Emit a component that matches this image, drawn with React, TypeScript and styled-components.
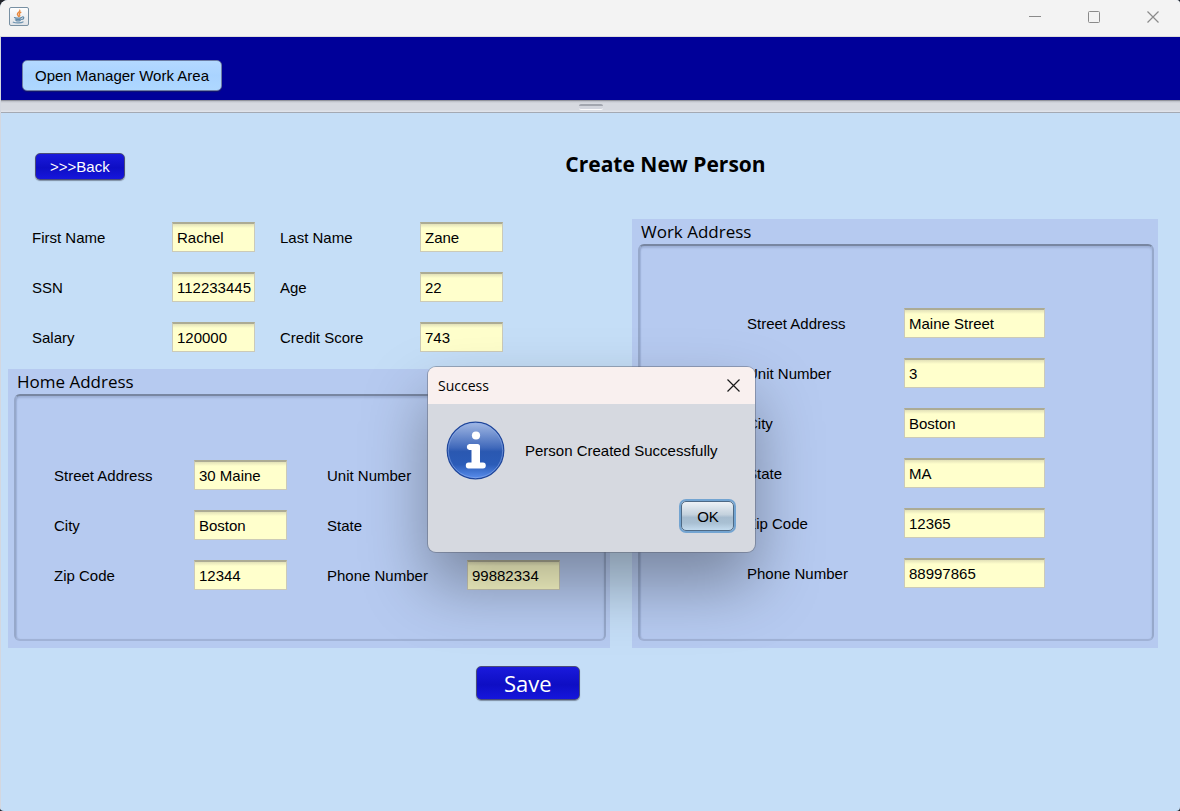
import React, { useId } from "react";
import styled, { createGlobalStyle } from "styled-components";

const GlobalStyle = createGlobalStyle`
  * { box-sizing: border-box; }
  body {
    margin: 0;
    background: #23252b;
    color: #000;
    font: 15px/20px "Liberation Sans", Arial, sans-serif;
  }
  button, input { font: inherit; color: inherit; }
`;

const humanist = `"Open Sans", "Noto Sans", sans-serif`;

const Window = styled.div`
  position: relative;
  display: flex;
  flex-direction: column;
  min-height: 100vh;
  border-radius: 8px 4px 4px 4px;
  overflow: hidden;
  background: #c5def7;
`;

const TitleBar = styled.div`
  display: flex;
  align-items: center;
  justify-content: space-between;
  height: 37px;
  padding: 0 0 3px 9px;
  background: #f3f3f3;
  border-bottom: 1px solid #dcdcdc;
`;

const WindowControls = styled.div`
  display: flex;
  gap: 5px;
`;

const ControlButton = styled.button`
  display: flex;
  align-items: center;
  justify-content: center;
  width: 54px;
  height: 30px;
  padding: 0;
  border: 0;
  background: none;
  color: #8a8a8a;
`;

const Body = styled.div`
  display: flex;
  flex-direction: column;
  flex: 1;
  border-left: 1px solid #d3d7e0;
`;

const Toolbar = styled.header`
  height: 63px;
  padding: 23px 21px 0;
  background: #000099;
`;

const Splitter = styled.div`
  display: flex;
  justify-content: center;
  height: 13px;
  padding-top: 3px;
  border-top: 1px solid #92949c;
  border-bottom: 1px solid #a4a9b3;
  background: linear-gradient(#b8bbc4, #d6d9e0 2px, #d6d9e0 9px, #e0e3ea 10px);
`;

const Grip = styled.div`
  width: 24px;
  height: 6px;
  border-radius: 2px;
  border-top: 2px solid #a2a6af;
  border-bottom: 1px solid #fafafc;
  background: #d2d5dd;
`;

const Button = styled.button<{ $tone: "light" | "deep"; $large?: boolean }>`
  display: block;
  border-radius: 5px;
  border: 1px solid ${(p) => (p.$tone === "light" ? "#6d7da6" : "#4b4d78")};
  background: ${(p) =>
    p.$tone === "light"
      ? "linear-gradient(#b4d9ff, #a9d3ff 50%, #afd8ff)"
      : "linear-gradient(#1a1adc, #0e0ec4 55%, #1616dc)"};
  box-shadow: 0 1px 1px rgba(40, 44, 60, 0.45);
  color: ${(p) => (p.$tone === "light" ? "#000" : "#fff")};
  font-family: ${(p) => (p.$large ? humanist : "inherit")};
  font-size: ${(p) => (p.$large ? "22px" : "15px")};
  line-height: ${(p) => (p.$large ? "31px" : p.$tone === "light" ? "28px" : "24px")};
  padding: ${(p) => (p.$large ? "1px 27px 0" : p.$tone === "light" ? "1px 12px 0" : "1px 14px 0")};
`;

const Page = styled.main`
  flex: 1;
  padding: 40px 22px 0 7px;
`;

const Heading = styled.div`
  display: grid;
  grid-template-columns: 1fr auto 1fr;
  align-items: start;
  height: 66px;
  padding: 0 0 0 27px;
`;

const Title = styled.h1`
  margin: 0;
  padding-left: 138px;
  font: bold 21px/22px ${humanist};
`;

const Columns = styled.div`
  display: grid;
  grid-template-columns: 602fr 526fr;
  column-gap: 22px;
`;

const LeftColumn = styled.div`
  display: flex;
  flex-direction: column;
`;

const FieldGrid = styled.div<{ $columns: number; $gap?: number }>`
  display: grid;
  grid-template-columns: repeat(${(p) => p.$columns}, max-content);
  gap: 20px ${(p) => p.$gap ?? 0}px;
`;

const PersonFields = styled.div`
  padding: 3px 24px 17px;
`;

const Panel = styled.section`
  display: flex;
  flex-direction: column;
  padding: 0 4px 7px 6px;
  background: #b6caf0;
`;

const PanelTitle = styled.h2`
  margin: 0;
  padding: 1px 0 0 3px;
  font: 17px/24px ${humanist};
`;

const PanelFrame = styled.div<{ $inset: string }>`
  flex: 1;
  padding: ${(p) => p.$inset};
  border: 2px solid #96a8ca;
  border-top-color: #7886a1;
  border-bottom-color: #a0b2d6;
  border-radius: 6px;
  box-shadow: inset 0 2px 2px rgba(70, 85, 125, 0.2), inset 1px 0 1px rgba(70, 85, 125, 0.15);
`;

const FieldRow = styled.div`
  display: flex;
  align-items: center;
`;

const FieldLabel = styled.label<{ $width: number }>`
  width: ${(p) => p.$width}px;
  padding-top: 1px;
`;

const TextBox = styled.input<{ $width: number }>`
  width: ${(p) => p.$width}px;
  height: 30px;
  padding: 0 2px 0 4px;
  border: 1px solid #cbcab8;
  border-top: 2px solid #acab94;
  border-radius: 0;
  outline: 0;
  background: linear-gradient(#e2e1b8, #ffffcc 4px);
`;

const SaveRow = styled.div`
  display: flex;
  padding: 18px 0 24px 468px;
`;

const Dialog = styled.section`
  position: absolute;
  top: 367px;
  left: 50%;
  margin-left: -162px;
  width: 327px;
  border-radius: 8px;
  background: #d6d9e0;
  box-shadow: 0 0 0 1px rgba(90, 95, 110, 0.45), 0 32px 64px rgba(0, 0, 0, 0.34);
`;

const DialogBar = styled.header`
  display: flex;
  align-items: center;
  justify-content: space-between;
  height: 37px;
  padding-left: 10px;
  border-radius: 8px 8px 0 0;
  background: #f9f0ef;
`;

const DialogTitle = styled.h2`
  margin: 0;
  font: 14px/20px ${humanist};
`;

const CloseButton = styled(ControlButton)`
  width: 43px;
  color: #1a1a1a;
`;

const DialogMessage = styled.div`
  display: flex;
  align-items: center;
  gap: 20px;
  padding: 17px 19px 0 18px;
`;

const MessageText = styled.p`
  margin: 0;
  white-space: nowrap;
`;

const DialogActions = styled.div`
  display: flex;
  justify-content: flex-end;
  padding: 21px;
`;

const OkButton = styled.button`
  width: 53px;
  height: 30px;
  padding: 2px 0 0 1px;
  border: 1px solid #4d6985;
  border-radius: 5px;
  background: linear-gradient(#eef2f6, #c3d1dd 45%, #a6bccf 55%, #a9c0d3 75%, #c3dbee);
  box-shadow: 0 0 0 2px #73a4d1;
`;

function JavaIcon() {
  return (
    <svg width="20" height="20" viewBox="0 0 20 20" aria-hidden="true">
      <defs>
        <linearGradient id="java-tile" x1="0" y1="0" x2="0" y2="1">
          <stop offset="0" stopColor="#ffffff" />
          <stop offset="1" stopColor="#dfe2e6" />
        </linearGradient>
      </defs>
      <rect x="0.5" y="0.5" width="19" height="18" rx="1.5" fill="url(#java-tile)" stroke="#7890a3" />
      <path d="M10.8 3.200c.8 1.700-2.700 2.400-2.400 4.100.1.800.8 1.300 1.100 2.100M11.800 5.300c-1.600.8-1.900 1.600-1.200 2.400.6.700.2 1.300-.5 1.900" fill="none" stroke="#e8883e" strokeWidth="1.300" strokeLinecap="round" />
      <path d="M5.500 10.500c2 .6 5.500.6 7 0M6.200 12c1.500.5 4.500.5 5.800 0M6.900 13.500c1.200.5 3.200.5 4.400 0M13.200 10c2.200-.6 2 2-.4 2.500" fill="none" stroke="#5f88a8" strokeWidth="1.200" strokeLinecap="round" />
      <path d="M4.300 15.200c2.500 1 8 .9 9.700-.3" fill="none" stroke="#6e94b1" strokeWidth="1.200" strokeLinecap="round" />
    </svg>
  );
}

function Cross({ size }: { size: number }) {
  return (
    <svg width={size} height={size} viewBox={`0 0 ${size} ${size}`} aria-hidden="true">
      <path
        d={`M.5.5 ${size - 0.5} ${size - 0.5}M${size - 0.5}.5.5 ${size - 0.5}`}
        stroke="currentColor"
        strokeWidth="1.200"
      />
    </svg>
  );
}

function InfoIcon() {
  return (
    <svg width="59" height="59" viewBox="0 0 59 59" aria-hidden="true">
      <defs>
        <linearGradient id="info-disc" x1="0" y1="0" x2="0" y2="1">
          <stop offset="0" stopColor="#a3b9e4" />
          <stop offset="0.450" stopColor="#4069bb" />
          <stop offset="0.520" stopColor="#2a58b1" />
          <stop offset="0.750" stopColor="#2b5cb8" />
          <stop offset="1" stopColor="#5b8fee" />
        </linearGradient>
      </defs>
      <circle cx="29.500" cy="29.500" r="28.300" fill="url(#info-disc)" stroke="#1f469b" strokeWidth="1.200" />
      <circle cx="29.500" cy="29.500" r="27.200" fill="none" stroke="#8eade9" strokeOpacity="0.550" />
      <circle cx="30" cy="14.500" r="4.100" fill="#fff" />
      <path
        d="M23.300 23.100H31.500Q34 23.100 34 25.600V41.500H37Q39.800 41.700 39.800 44.500T37 47.500H22.500Q19.800 47.300 19.800 44.500T22.500 41.500H25.500V29H23.300Q20.800 28.800 20.800 26.100T23.300 23.100Z"
        fill="#fff"
      />
    </svg>
  );
}

type FieldProps = { label: string; value: string; labelWidth: number; width: number };

function Field({ label, value, labelWidth, width }: FieldProps) {
  const id = useId();
  return (
    <FieldRow>
      <FieldLabel htmlFor={id} $width={labelWidth}>{label}</FieldLabel>
      <TextBox id={id} type="text" defaultValue={value} $width={width} />
    </FieldRow>
  );
}

const person = [
  ["First Name", "Rachel"],
  ["Last Name", "Zane"],
  ["SSN", "112233445"],
  ["Age", "22"],
  ["Salary", "120000"],
  ["Credit Score", "743"],
];

const home = [
  ["Street Address", "30 Maine"],
  ["Unit Number", ""],
  ["City", "Boston"],
  ["State", ""],
  ["Zip Code", "12344"],
  ["Phone Number", "99882334"],
];

const work = [
  ["Street Address", "Maine Street"],
  ["Unit Number", "3"],
  ["City", "Boston"],
  ["State", "MA"],
  ["Zip Code", "12365"],
  ["Phone Number", "88997865"],
];

export default function App() {
  return (
    <>
      <GlobalStyle />
      <Window>
        <TitleBar>
          <JavaIcon />
          <WindowControls>
            <ControlButton aria-label="Minimize">
              <svg width="12" height="12" viewBox="0 0 12 12" aria-hidden="true">
                <path d="M0 5.500H12" stroke="currentColor" />
              </svg>
            </ControlButton>
            <ControlButton aria-label="Maximize">
              <svg width="12" height="12" viewBox="0 0 12 12" aria-hidden="true">
                <rect x="0.500" y="0.500" width="11" height="11" rx="1" fill="none" stroke="currentColor" />
              </svg>
            </ControlButton>
            <ControlButton aria-label="Close">
              <Cross size={12} />
            </ControlButton>
          </WindowControls>
        </TitleBar>
        <Body>
          <Toolbar>
            <Button $tone="light">Open Manager Work Area</Button>
          </Toolbar>
          <Splitter>
            <Grip />
          </Splitter>
          <Page>
            <Heading>
              <div>
                <Button $tone="deep">&gt;&gt;&gt;Back</Button>
              </div>
              <Title>Create New Person</Title>
            </Heading>
            <Columns>
              <LeftColumn>
                <PersonFields>
                  <FieldGrid $columns={2} $gap={25}>
                    {person.map(([label, value]) => (
                      <Field key={label} label={label} value={value} labelWidth={140} width={83} />
                    ))}
                  </FieldGrid>
                </PersonFields>
                <Panel>
                  <PanelTitle>Home Address</PanelTitle>
                  <PanelFrame $inset="64px 0 49px 38px">
                    <FieldGrid $columns={2} $gap={40}>
                      {home.map(([label, value]) => (
                        <Field key={label} label={label} value={value} labelWidth={140} width={93} />
                      ))}
                    </FieldGrid>
                  </PanelFrame>
                </Panel>
              </LeftColumn>
              <Panel>
                <PanelTitle>Work Address</PanelTitle>
                <PanelFrame $inset="62px 0 49px 107px">
                  <FieldGrid $columns={1}>
                    {work.map(([label, value]) => (
                      <Field key={label} label={label} value={value} labelWidth={157} width={141} />
                    ))}
                  </FieldGrid>
                </PanelFrame>
              </Panel>
            </Columns>
            <SaveRow>
              <Button $tone="deep" $large>Save</Button>
            </SaveRow>
          </Page>
        </Body>
        <Dialog role="dialog" aria-labelledby="dialog-title">
          <DialogBar>
            <DialogTitle id="dialog-title">Success</DialogTitle>
            <CloseButton aria-label="Close dialog">
              <Cross size={13} />
            </CloseButton>
          </DialogBar>
          <DialogMessage>
            <InfoIcon />
            <MessageText>Person Created Successfully</MessageText>
          </DialogMessage>
          <DialogActions>
            <OkButton>OK</OkButton>
          </DialogActions>
        </Dialog>
      </Window>
    </>
  );
}
